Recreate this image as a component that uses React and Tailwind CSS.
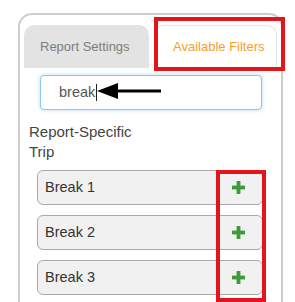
import React from "react";

const ROWS = ["Break 1", "Break 2", "Break 3"];

const PlusIcon = () => (
    <svg width="13" height="13" viewBox="0 0 13 13" aria-hidden="true">
        <rect x="4.6" y="0" width="3.8" height="13" fill="#3f9a3c" />
        <rect x="0" y="4.6" width="13" height="3.8" fill="#3f9a3c" />
    </svg>
);

const App = () => {
    return (
        <div className="relative h-[302px] w-[295px] overflow-hidden bg-white font-['Liberation_Sans',Arial,sans-serif]">
            {/* panel */}
            <div className="ml-[18px] mt-[13px] h-[330px] w-[265px] rounded-[14px] border-2 border-[#cdcdcd] px-[4px] pt-[10px]">
                {/* tabs */}
                <div className="flex gap-[5px]">
                    <div className="flex h-[43px] w-[125px] items-center rounded-t-[10px] bg-[#e3e3e3] pl-[16px] text-[13px] text-[#7d7d7d]">
                        Report Settings
                    </div>
                    <div className="flex h-[43px] flex-1 items-center rounded-t-[10px] border border-b-0 border-[#e4e4e4] bg-white pl-[18px] text-[13px] text-[#f6a02e]">
                        Available Filters
                    </div>
                </div>

                {/* search */}
                <div className="ml-[16px] mt-[7px] flex h-[35px] w-[222px] items-center rounded-[4px] border border-[#8fc4ef] bg-white pl-[18px] text-[14.5px] text-[#555] shadow-[0_0_4px_rgba(102,175,233,0.45)]">
                    <span>break</span>
                    <span className="ml-[1px] inline-block h-[17px] border-l border-[#222]" />
                </div>

                <div className="ml-[5px] mt-[12px] text-[15px] leading-[20px] text-[#444]">
                    <div>Report-Specific</div>
                    <div>Trip</div>
                </div>

                {/* filter rows */}
                <div className="ml-[13px] mt-[8px] flex w-[226px] flex-col gap-[10px]">
                    {ROWS.map((label) => (
                        <div
                            key={label}
                            className="flex h-[35px] items-center justify-between rounded-[6px] border border-[#a9a9a9] bg-[#f1f1f1] pl-[7px] pr-[17px] text-[14.5px] text-[#333]"
                        >
                            <span>{label}</span>
                            <PlusIcon />
                        </div>
                    ))}
                </div>
            </div>

            {/* annotations */}
            <div className="absolute left-[154px] top-[17px] h-[54px] w-[131px] border-4 border-[#e3151a]" />
            <div className="absolute left-[216px] top-[170px] h-[132px] w-[50px] border-4 border-[#e3151a]" />
            <svg className="absolute left-[96px] top-[82px]" width="66" height="18" viewBox="0 0 66 18" aria-hidden="true">
                <polygon points="1,9 22,1 22,17" fill="#000" />
                <rect x="20" y="7.5" width="45" height="3" fill="#000" />
            </svg>
        </div>
    );
};

export default App;
